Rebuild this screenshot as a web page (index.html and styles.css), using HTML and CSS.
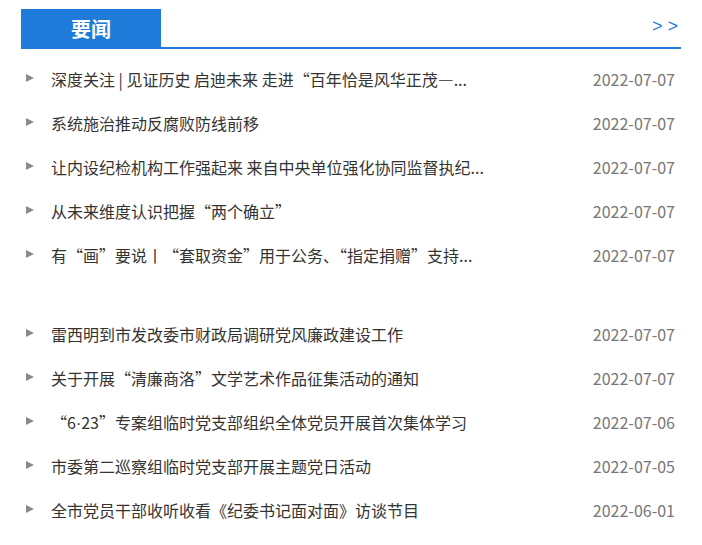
FILE: index.html
```html
<!DOCTYPE html>
<html lang="zh">
<head>
<meta charset="utf-8">
<title>要闻</title>
<link rel="stylesheet" href="styles.css">
</head>
<body>
<div class="panel">
  <div class="panel-head">
    <div class="tab">要闻</div>
    <a class="more" href="#">&gt;&gt;</a>
  </div>
  <ul class="news">
    <li><a class="title" href="#">深度关注 | 见证历史 启迪未来 走进“百年恰是风华正茂—...</a><span class="date">2022-07-07</span></li>
    <li><a class="title" href="#">系统施治推动反腐败防线前移</a><span class="date">2022-07-07</span></li>
    <li><a class="title" href="#">让内设纪检机构工作强起来 来自中央单位强化协同监督执纪...</a><span class="date">2022-07-07</span></li>
    <li><a class="title" href="#">从未来维度认识把握“两个确立”</a><span class="date">2022-07-07</span></li>
    <li><a class="title" href="#">有“画”要说丨“套取资金”用于公务、“指定捐赠”支持...</a><span class="date">2022-07-07</span></li>
  </ul>
  <ul class="news second">
    <li><a class="title" href="#">雷西明到市发改委市财政局调研党风廉政建设工作</a><span class="date">2022-07-07</span></li>
    <li><a class="title" href="#">关于开展“清廉商洛”文学艺术作品征集活动的通知</a><span class="date">2022-07-07</span></li>
    <li><a class="title" href="#">“6<span class="dot">·</span>23”专案组临时党支部组织全体党员开展首次集体学习</a><span class="date">2022-07-06</span></li>
    <li><a class="title" href="#">市委第二巡察组临时党支部开展主题党日活动</a><span class="date">2022-07-05</span></li>
    <li><a class="title" href="#">全市党员干部收听收看《纪委书记面对面》访谈节目</a><span class="date">2022-06-01</span></li>
  </ul>
</div>
</body>
</html>
```
FILE: styles.css
```css
* { box-sizing: border-box; }
html, body { margin: 0; padding: 0; background: #fff; }
body {
  font-family: "Microsoft YaHei", "Noto Sans CJK SC", "Noto Sans", sans-serif;
  color: #333;
}
.panel {
  width: 660px;
  margin: 9px 0 0 21px;
}
.panel-head {
  display: flex;
  justify-content: space-between;
  align-items: center;
  height: 40px;
  border-bottom: 2px solid #1f7bd9;
}
.tab {
  width: 140px;
  height: 40px;
  margin-bottom: -2px;
  background: #1f7bd9;
  color: #fff;
  font-size: 20px;
  font-weight: bold;
  line-height: 40px;
  text-align: center;
}
.more {
  color: #1f7bd9;
  text-decoration: none;
  font-family: "Liberation Sans", sans-serif;
  font-size: 18px;
  letter-spacing: 5px;
  margin-right: -2px;
  margin-top: -4px;
}
.news {
  list-style: none;
  margin: 0;
  padding: 8px 0 0 0;
}
.news.second { padding-top: 35px; }
.news li {
  display: flex;
  align-items: center;
  height: 44px;
  padding: 0 6px 0 5px;
  font-size: 16px;
}
.news li::before {
  content: "";
  width: 0;
  height: 0;
  border-top: 4px solid transparent;
  border-bottom: 4px solid transparent;
  border-left: 8px solid #8a8a8a;
  margin-right: 17px;
  margin-top: -2px;
  flex: none;
}
.title {
  color: #333;
  text-decoration: none;
  white-space: nowrap;
}
.dot { font-family: "Liberation Sans", sans-serif; }
.date {
  margin-left: auto;
  color: #777;
  font-size: 16px;
}
```
